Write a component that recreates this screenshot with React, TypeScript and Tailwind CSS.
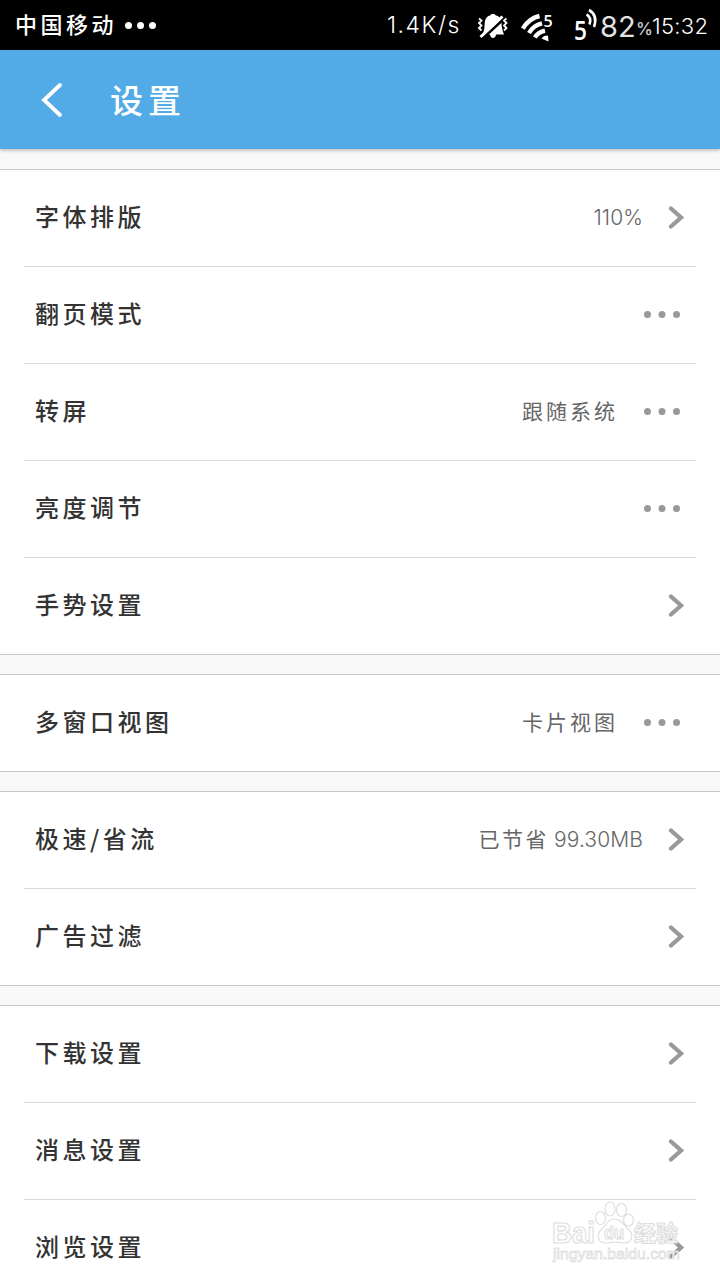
type Row = {
  label: string
  value?: string
  amount?: string
  more?: boolean
}

const sections: Row[][] = [
  [
    { label: '字体排版', amount: '110%' },
    { label: '翻页模式', more: true },
    { label: '转屏', value: '跟随系统', more: true },
    { label: '亮度调节', more: true },
    { label: '手势设置' },
  ],
  [{ label: '多窗口视图', value: '卡片视图', more: true }],
  [
    { label: '极速/省流', value: '已节省', amount: '99.30MB' },
    { label: '广告过滤' },
  ],
  [
    { label: '下载设置' },
    { label: '消息设置' },
    { label: '浏览设置' },
  ],
]

function MutedBell() {
  return (
    <svg className="ml-[17px] mt-[2px] h-[26px] w-[32px] shrink-0" viewBox="0 0 32 26" fill="none">
      <path
        d="M16 1C17.500 1 18.200 1.500 18.600 2.300C22.500 3.300 24.300 6 24.500 10C24.700 14.500 25.500 17.500 27 21.500H19C18.800 23.700 17.600 25 16 25S13.200 23.700 13 21.500H5.500C7.300 17.600 7.500 14.500 7.700 10C7.900 6 9.700 3.300 13.400 2.300C13.800 1.500 14.500 1 16 1Z"
        fill="white"
      />
      <path d="M5.500 25.500 27.500 5" stroke="black" strokeWidth="3" />
      <path d="M3.500 24 25.500 3.500" stroke="white" strokeWidth="3" />
      <path
        d="M2 5.500l2.500 2L2 10l2.500 2.500L2 15l2.500 2.500M29.500 5.500l-2.500 2 2.500 2.500-2.500 2.500 2.500 2.500-2.500 2.500"
        stroke="white"
        strokeWidth="1.800"
      />
    </svg>
  )
}

function Wifi() {
  return (
    <svg className="ml-[12px] h-[34px] w-[34px] shrink-0" viewBox="0 0 34 34" fill="none">
      <g stroke="white" strokeWidth="4.400">
        <path d="M1.800 20.500C5.500 14.500 10.500 9.800 18.500 8" />
        <path d="M8 25C10.500 20.500 14 17 21 15.300" />
        <path d="M14 29.500C15.800 26 18.500 24 24 22.700" />
      </g>
      <path d="M20.500 30.500l2.500-2.500 4-.5.500 6z" fill="white" />
      <text x="22.500" y="19" fontSize="16" fontWeight="600" fill="white" fontFamily="Open Sans, sans-serif">
        5
      </text>
    </svg>
  )
}

function Signal() {
  return (
    <svg className="ml-[19px] h-[36px] w-[26px] shrink-0 overflow-visible" viewBox="0 0 26 36" fill="none">
      <text x="0" y="32.500" fontSize="27" fontWeight="600" fill="white" fontFamily="Open Sans, sans-serif" textLength="13" lengthAdjust="spacingAndGlyphs">
        5
      </text>
      <path d="M12.500 7.500Q18 10.500 15.500 17.500" stroke="white" strokeWidth="2.600" />
      <path d="M15 3Q24 8 20 20" stroke="white" strokeWidth="2.600" />
    </svg>
  )
}

function StatusBar() {
  return (
    <div className="flex h-[50px] items-center bg-black leading-none text-white">
      <span className="mb-1 ml-[15px] w-[110px] whitespace-nowrap text-[22px] font-medium tracking-[3.500px]">中国移动</span>
      <svg className="h-2 w-8 shrink-0" viewBox="0 0 32 8" fill="white">
        <circle cx="3.500" cy="4.500" r="3.500" />
        <circle cx="15.500" cy="4.500" r="3.500" />
        <circle cx="27.500" cy="4.500" r="3.500" />
      </svg>
      <span className="ml-auto w-[73px] whitespace-nowrap font-[Inter] text-[23px] font-light tracking-[1.500px]">1.4K/s</span>
      <MutedBell />
      <Wifi />
      <Signal />
      <span className="mt-[2px] w-[36px] whitespace-nowrap font-[Inter] text-[29px] text-[#e2e2e2]">82</span>
      <span className="mt-2 w-[16px] font-[Inter] text-[17px] font-medium text-[#cfcfcf]">%</span>
      <span className="mr-[12px] mt-[2px] w-[56px] whitespace-nowrap font-[Inter] text-[22px] font-light tracking-[0.300px]">15:32</span>
    </div>
  )
}

function Chevron() {
  return (
    <svg className="mb-[2px] ml-[25px] mr-[36px] h-6 w-4 shrink-0" viewBox="0 0 16 24" fill="none">
      <path d="M3 3.500 13 12.500 3 21.500" stroke="#999999" strokeWidth="4.200" strokeLinecap="round" />
    </svg>
  )
}

function Dots() {
  return (
    <svg className="mb-[2px] ml-[25px] mr-[39px] h-2 w-[38px] shrink-0" viewBox="0 0 38 8" fill="#999999">
      <circle cx="4.500" cy="4.500" r="3.500" />
      <circle cx="19" cy="4.500" r="3.500" />
      <circle cx="33.500" cy="4.500" r="3.500" />
    </svg>
  )
}

function SettingRow({ row }: { row: Row }) {
  return (
    <div className="flex h-24 items-center">
      <span className="mb-[5px] ml-[35px] flex-1 text-[24px] font-medium tracking-[3.500px] text-[#333333]">{row.label}</span>
      {row.value && (
        <span className={row.amount ? 'mb-[2px] -mr-[3px] text-[21px] tracking-[2.500px] text-[#666666]' : 'mb-[2px] text-[21px] tracking-[3px] text-[#666666]'}>
          {row.value}
        </span>
      )}
      {row.amount && <span className="ml-2 font-[Inter] text-[21px] font-light tracking-[0.100px] text-[#666666]">{row.amount}</span>}
      {row.more ? <Dots /> : <Chevron />}
    </div>
  )
}

function Watermark() {
  return (
    <svg className="absolute bottom-[10px] left-[545px] h-[80px] w-[145px]" viewBox="0 0 145 80" fill="white" stroke="#dedede" strokeWidth="1.200">
      <g fontFamily="Liberation Sans, sans-serif" fontWeight="700">
        <text x="7" y="52.500" fontSize="30" textLength="43" lengthAdjust="spacingAndGlyphs">Bai</text>
        <path d="M69 29c-6 0-8 6-12 10-6 5-5 14 4 14 4 0 6-1 9-1s5 1 9 1c9 0 10-9 4-14-4-4-7-10-14-10Z" />
        <ellipse cx="55.500" cy="28" rx="5" ry="6.500" />
        <ellipse cx="65" cy="19" rx="5" ry="7" />
        <ellipse cx="76.500" cy="20" rx="5" ry="6.500" />
        <ellipse cx="83.500" cy="30" rx="5" ry="6" />
        <text x="59" y="49" fontSize="19" textLength="20" lengthAdjust="spacingAndGlyphs">du</text>
      </g>
      <text x="89" y="50.500" fontSize="22" fontWeight="700" fontFamily="Noto Sans CJK SC, sans-serif">经验</text>
      <text x="8" y="69" fontSize="15" strokeWidth="0.800" fontFamily="Liberation Sans, sans-serif" textLength="127" lengthAdjust="spacingAndGlyphs">
        jingyan.baidu.com
      </text>
    </svg>
  )
}

export default function App() {
  return (
    <div className="relative h-[1280px] w-[720px] overflow-hidden bg-[#f8f8f8] font-['Noto_Sans_CJK_SC',sans-serif]">
      <StatusBar />
      <header className="flex h-[99px] items-center bg-[#52abe6] text-white shadow-[0_1px_4px_rgba(0,0,0,0.3)]">
        <svg className="ml-[40px] h-[38px] w-6 shrink-0" viewBox="0 0 24 38" fill="none">
          <path d="M20 4 4 19 20 34" stroke="white" strokeWidth="3.800" strokeLinecap="round" />
        </svg>
        <h1 className="ml-[46px] text-[33px] font-medium tracking-[5px]">设置</h1>
      </header>
      <main className="flex flex-col gap-[19px] pt-5">
        {sections.map((rows, i) => (
          <section key={i} className="border-y border-[#c8c8c8] bg-white">
            {rows.map((row, j) => (
              <div key={row.label}>
                {j > 0 && <div className="mx-6 h-px bg-[#d9d9d9]" />}
                <SettingRow row={row} />
              </div>
            ))}
          </section>
        ))}
      </main>
      <Watermark />
    </div>
  )
}
